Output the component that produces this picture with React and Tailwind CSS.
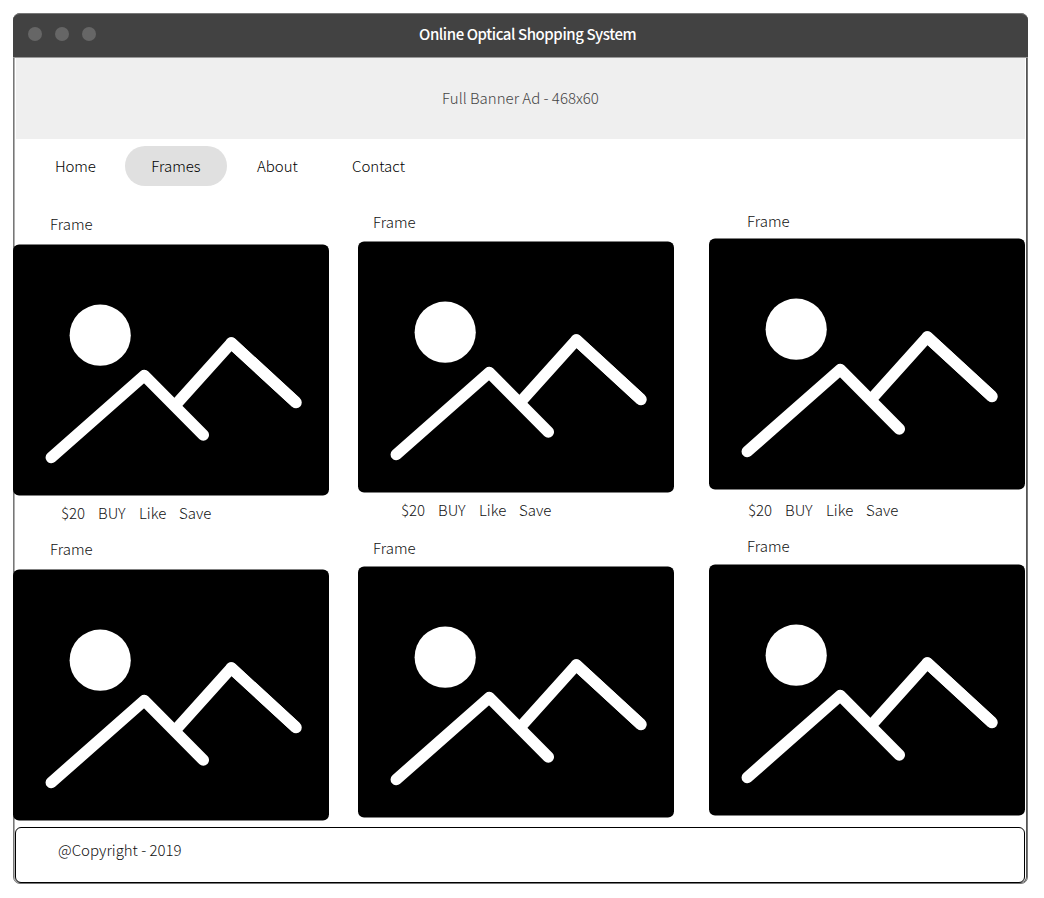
const font = "font-['Noto_Sans_CJK_SC',sans-serif]";

function Picture() {
  return (
    <svg className="block shrink-0" width="316" height="252" viewBox="0 0 316 252">
      <rect x="0" y="0.5" width="316" height="251" rx="6" fill="#000" />
      <circle cx="87.2" cy="91.2" r="30.6" fill="#fff" />
      <g fill="none" stroke="#fff" strokeWidth="11.5" strokeLinecap="round" strokeLinejoin="round">
        <path d="M38.3 213.5 L131.3 131.5 L190.3 191" />
        <path d="M162.5 161 L218.3 99 L283 158.5" strokeLinecap="butt" />
        <path d="M218.3 99 L283 158.5" />
      </g>
    </svg>
  );
}

function Label({ className }) {
  return <div className={`h-5 text-[15px] leading-5 text-[#111] ${className}`}>Frame</div>;
}

function Actions({ className }) {
  return (
    <div className={`flex h-5 text-[15px] leading-5 text-[#111] ${className}`}>
      <span className="w-[37px]">$20</span>
      <span className="w-[41px]">BUY</span>
      <span className="w-[40px]">Like</span>
      <span>Save</span>
    </div>
  );
}

export default function App() {
  return (
    <div className={`h-[898px] w-[1044px] bg-white p-[13px] font-light ${font}`}>
      <div className="flex h-[871px] w-[1015px] flex-col rounded-[7px] border border-[#777] bg-white shadow-[inset_1px_0_0_#b0b0b0,inset_-1px_0_0_#555,inset_0_-1px_0_#999]">
        <header className="-mx-px -mt-px flex h-[45px] shrink-0 items-center rounded-t-[7px] border-t border-b border-t-[#777] border-b-[#999] bg-[#424242]">
          <div className="flex w-[406px] gap-[13px] pb-[3px] pl-[15px]">
            <span className="size-[14px] rounded-full bg-[#666]" />
            <span className="size-[14px] rounded-full bg-[#666]" />
            <span className="size-[14px] rounded-full bg-[#666]" />
          </div>
          <h1 className="pb-[3px] text-[15px] leading-5 font-medium tracking-[-0.43px] text-white">
            Online Optical Shopping System
          </h1>
        </header>
        <div className="ml-[2px] flex h-[81px] w-[1009px] shrink-0 items-center justify-center bg-[#efefef] text-[15px] text-[#444]">
          Full Banner Ad - 468x60
        </div>
        <nav className="mt-[7px] flex h-10 shrink-0 items-center text-[15px] leading-5 text-black">
          <a className="ml-[41px] w-[70px] tracking-[-0.1px]">Home</a>
          <a className="flex h-10 w-[102px] items-center justify-center rounded-full bg-[#e0e0e0]">Frames</a>
          <a className="ml-[30px] w-[95px]">About</a>
          <a>Contact</a>
        </nav>
        <main className="-ml-px flex h-[641px] shrink-0">
          <section className="flex w-[345px] flex-col pt-[28px]">
            <Label className="mb-[10px] ml-[37px]" />
            <Picture />
            <Actions className="mt-[7px] mb-[16px] ml-[48px]" />
            <Label className="mb-[10px] ml-[37px]" />
            <Picture />
          </section>
          <section className="flex w-[351px] flex-col pt-[26px]">
            <Label className="mb-[9px] ml-[15px]" />
            <Picture />
            <Actions className="mt-[7px] mb-[18px] ml-[43px]" />
            <Label className="mb-[8px] ml-[15px]" />
            <Picture />
          </section>
          <section className="flex w-[316px] flex-col pt-[25px]">
            <Label className="mb-[7px] ml-[38px]" />
            <Picture />
            <Actions className="mt-[10px] mb-[16px] ml-[39px]" />
            <Label className="mb-[8px] ml-[38px]" />
            <Picture />
          </section>
        </main>
        <footer className="ml-px h-[56px] w-[1010px] shrink-0 rounded-[6px] border border-black pt-[12px] pl-[42px] text-[15px] leading-5 text-[#111]">
          @Copyright - 2019
        </footer>
      </div>
    </div>
  );
}
